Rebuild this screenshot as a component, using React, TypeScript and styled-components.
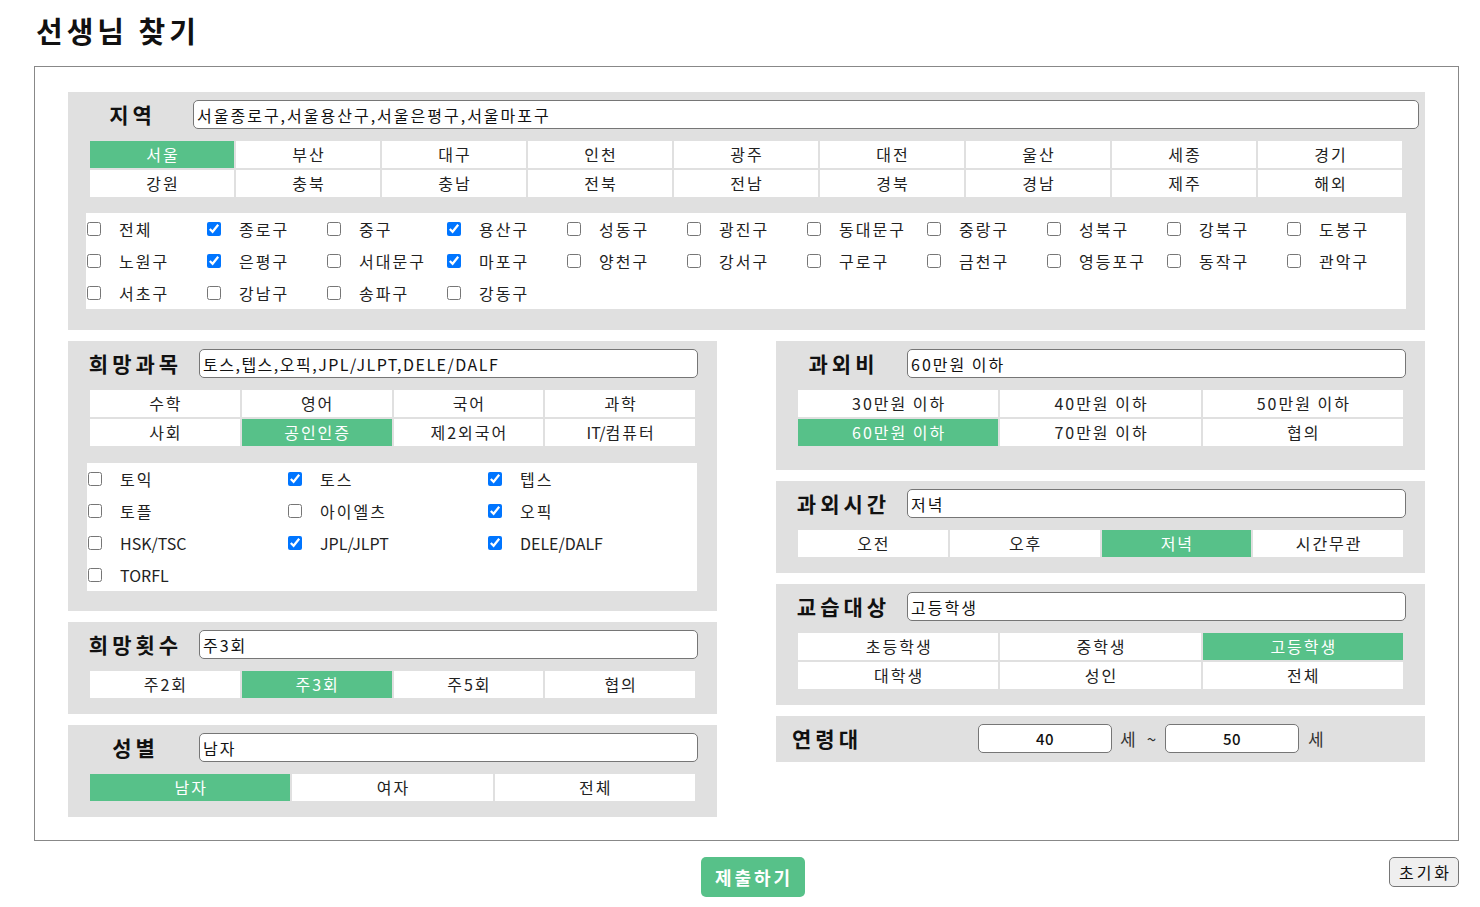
import React, { useState } from "react";
import styled, { createGlobalStyle } from "styled-components";

const GlobalStyle = createGlobalStyle`
  body {
    margin: 0;
    background: #fff;
    font-family: "Noto Sans CJK KR", "Noto Sans", sans-serif;
    color: #222;
  }
`;

const Page = styled.div`
  padding: 0 21px 0 34px;
`;

const Title = styled.h2`
  margin: 12px 0 18px 2px;
  font-size: 29px;
  line-height: 36px;
  font-weight: 700;
  letter-spacing: 4px;
  color: #111;
`;

const Frame = styled.div`
  border: 1px solid #888;
  padding: 25px 33px 23px 33px;
  display: flex;
  flex-direction: column;
  gap: 11px;
`;

const Columns = styled.div`
  display: grid;
  grid-template-columns: 1fr 1fr;
  column-gap: 59px;
  align-items: start;
`;

const Column = styled.div`
  display: flex;
  flex-direction: column;
  gap: 11px;
`;

const Panel = styled.section<{ $pb: number }>`
  background: #e0e0e0;
  padding: 8px 0 ${(p) => p.$pb}px 0;
`;

const Header = styled.div<{ $labelW: number; $mr: number }>`
  display: grid;
  grid-template-columns: ${(p) => p.$labelW}px 1fr;
  align-items: center;
  margin-right: ${(p) => p.$mr}px;
`;

const Label = styled.div`
  text-align: center;
  font-size: 21px;
  line-height: 29px;
  font-weight: 700;
  letter-spacing: 4px;
  text-indent: 4px;
  color: #111;
`;

const TextInput = styled.input<{ $ls?: number }>`
  box-sizing: border-box;
  height: 29px;
  border: 1px solid #767676;
  border-radius: 5px;
  background: #fff;
  padding: 0 3px;
  font-family: inherit;
  font-size: 16px;
  letter-spacing: ${(p) => p.$ls ?? 2}px;
  color: #111;
  outline: none;
`;

const ButtonGrid = styled.div<{ $cols: number; $ml: number; $mr: number }>`
  display: grid;
  grid-template-columns: repeat(${(p) => p.$cols}, 1fr);
  gap: 2px;
  margin: 12px ${(p) => p.$mr}px 0 ${(p) => p.$ml}px;
`;

const Choice = styled.button<{ $active?: boolean }>`
  height: 27px;
  border: none;
  padding: 0 0 2px 2px;
  background: ${(p) => (p.$active ? "#57c189" : "#fff")};
  color: ${(p) => (p.$active ? "#fff" : "#222")};
  font-family: inherit;
  font-size: 16px;
  letter-spacing: 2px;
  cursor: pointer;
`;

const Latin = styled.span`
  letter-spacing: 0;
`;

const CheckArea = styled.div<{ $cols: string; $ml: number; $mr: number; $mt: number }>`
  display: grid;
  grid-template-columns: ${(p) => p.$cols};
  grid-auto-rows: 32px;
  background: #fff;
  margin: ${(p) => p.$mt}px ${(p) => p.$mr}px 0 ${(p) => p.$ml}px;
`;

const CheckItem = styled.label`
  display: flex;
  align-items: center;
  font-size: 16px;
  letter-spacing: 2px;
  color: #222;
  white-space: nowrap;
`;

const Box = styled.input.attrs({ type: "checkbox" })`
  width: 14px;
  height: 14px;
  margin: 0 18px 0 1px;
`;

const AgeRow = styled.div`
  display: flex;
  align-items: center;
  margin-right: 19px;
`;

const AgeLabel = styled(Label)`
  width: 98px;
`;

const AgeInput = styled(TextInput)`
  width: 134px;
  text-align: center;
  font-size: 15px;
  font-weight: 500;
  letter-spacing: 0.5px;
`;

const Unit = styled.span<{ $ml: number }>`
  margin-left: ${(p) => p.$ml}px;
  font-size: 17px;
  color: #333;
`;

const Footer = styled.div`
  display: grid;
  grid-template-columns: 1fr auto 1fr;
  align-items: start;
  padding: 16px 0 0 12px;
`;

const Submit = styled.button`
  grid-column: 2;
  width: 104px;
  height: 40px;
  border: none;
  border-radius: 5px;
  background: #57c189;
  color: #fff;
  font-family: inherit;
  font-size: 18px;
  font-weight: 700;
  letter-spacing: 3px;
  padding: 0 0 0 3px;
`;

const Reset = styled.button`
  justify-self: end;
  width: 70px;
  height: 30px;
  border: 1px solid #767676;
  border-radius: 5px;
  background: #efefef;
  color: #111;
  font-family: inherit;
  font-size: 16px;
  letter-spacing: 3px;
  padding: 0 0 0 3px;
`;

const cities = [
  "서울", "부산", "대구", "인천", "광주", "대전", "울산", "세종", "경기",
  "강원", "충북", "충남", "전북", "전남", "경북", "경남", "제주", "해외",
];

const districts = [
  "전체", "종로구", "중구", "용산구", "성동구", "광진구", "동대문구", "중랑구", "성북구", "강북구", "도봉구",
  "노원구", "은평구", "서대문구", "마포구", "양천구", "강서구", "구로구", "금천구", "영등포구", "동작구", "관악구",
  "서초구", "강남구", "송파구", "강동구",
];
const checkedDistricts = ["종로구", "용산구", "은평구", "마포구"];

const subjects = ["수학", "영어", "국어", "과학", "사회", "공인인증", "제2외국어", "IT/컴퓨터"];
const exams = ["토익", "토스", "텝스", "토플", "아이엘츠", "오픽", "HSK/TSC", "JPL/JLPT", "DELE/DALF", "TORFL"];
const checkedExams = ["토스", "텝스", "오픽", "JPL/JLPT", "DELE/DALF"];

const fees = ["30만원 이하", "40만원 이하", "50만원 이하", "60만원 이하", "70만원 이하", "협의"];
const times = ["오전", "오후", "저녁", "시간무관"];
const targets = ["초등학생", "중학생", "고등학생", "대학생", "성인", "전체"];
const counts = ["주2회", "주3회", "주5회", "협의"];
const genders = ["남자", "여자", "전체"];

// latin runs are set tighter than hangul
const Txt: React.FC<{ text: string }> = ({ text }) => (
  <>
    {text.split(/([A-Za-z/]+)/).map((part, i) =>
      /[A-Za-z]/.test(part) ? <Latin key={i}>{part}</Latin> : part,
    )}
  </>
);

interface ChoicesProps {
  items: string[];
  cols: number;
  active: string;
  ml?: number;
  mr?: number;
  onPick: (v: string) => void;
}

const Choices: React.FC<ChoicesProps> = ({ items, cols, active, ml = 22, mr = 22, onPick }) => (
  <ButtonGrid $cols={cols} $ml={ml} $mr={mr}>
    {items.map((it) => (
      <Choice key={it} $active={it === active} onClick={() => onPick(it)}>
        <Txt text={it} />
      </Choice>
    ))}
  </ButtonGrid>
);

export default function App() {
  const [city, setCity] = useState("서울");
  const [subject, setSubject] = useState("공인인증");
  const [fee, setFee] = useState("60만원 이하");
  const [time, setTime] = useState("저녁");
  const [target, setTarget] = useState("고등학생");
  const [count, setCount] = useState("주3회");
  const [gender, setGender] = useState("남자");

  return (
    <Page>
      <GlobalStyle />
      <Title>선생님 찾기</Title>
      <Frame>
        <Panel $pb={21}>
          <Header $labelW={125} $mr={6}>
            <Label>지역</Label>
            <TextInput readOnly value="서울종로구,서울용산구,서울은평구,서울마포구" />
          </Header>
          <Choices items={cities} cols={9} active={city} ml={22} mr={23} onPick={setCity} />
          <CheckArea $cols="repeat(11, 1fr)" $ml={18} $mr={19} $mt={16}>
            {districts.map((d) => (
              <CheckItem key={d}>
                <Box defaultChecked={checkedDistricts.includes(d)} />
                {d}
              </CheckItem>
            ))}
          </CheckArea>
        </Panel>

        <Columns>
          <Column>
            <Panel $pb={20}>
              <Header $labelW={131} $mr={19}>
                <Label>희망과목</Label>
                <TextInput readOnly $ls={1.5} value="토스,텝스,오픽,JPL/JLPT,DELE/DALF" />
              </Header>
              <Choices items={subjects} cols={4} active={subject} onPick={setSubject} />
              <CheckArea $cols="repeat(3, 200px)" $ml={19} $mr={20} $mt={17}>
                {exams.map((e) => (
                  <CheckItem key={e}>
                    <Box defaultChecked={checkedExams.includes(e)} />
                    <Txt text={e} />
                  </CheckItem>
                ))}
              </CheckArea>
            </Panel>

            <Panel $pb={16}>
              <Header $labelW={131} $mr={19}>
                <Label>희망횟수</Label>
                <TextInput readOnly value={count} />
              </Header>
              <Choices items={counts} cols={4} active={count} onPick={setCount} />
            </Panel>

            <Panel $pb={16}>
              <Header $labelW={131} $mr={19}>
                <Label>성별</Label>
                <TextInput readOnly value={gender} />
              </Header>
              <Choices items={genders} cols={3} active={gender} onPick={setGender} />
            </Panel>
          </Column>

          <Column>
            <Panel $pb={24}>
              <Header $labelW={131} $mr={19}>
                <Label>과외비</Label>
                <TextInput readOnly value={fee} />
              </Header>
              <Choices items={fees} cols={3} active={fee} onPick={setFee} />
            </Panel>

            <Panel $pb={16}>
              <Header $labelW={131} $mr={19}>
                <Label>과외시간</Label>
                <TextInput readOnly value={time} />
              </Header>
              <Choices items={times} cols={4} active={time} onPick={setTime} />
            </Panel>

            <Panel $pb={16}>
              <Header $labelW={131} $mr={19}>
                <Label>교습대상</Label>
                <TextInput readOnly value={target} />
              </Header>
              <Choices items={targets} cols={3} active={target} onPick={setTarget} />
            </Panel>

            <Panel $pb={9}>
              <AgeRow>
                <AgeLabel>연령대</AgeLabel>
                <AgeInput defaultValue="40" style={{ marginLeft: 104 }} />
                <Unit $ml={8}>세</Unit>
                <Unit $ml={11}>~</Unit>
                <AgeInput defaultValue="50" style={{ marginLeft: 9 }} />
                <Unit $ml={9}>세</Unit>
              </AgeRow>
            </Panel>
          </Column>
        </Columns>
      </Frame>
      <Footer>
        <Submit>제출하기</Submit>
        <Reset>초기화</Reset>
      </Footer>
    </Page>
  );
}
